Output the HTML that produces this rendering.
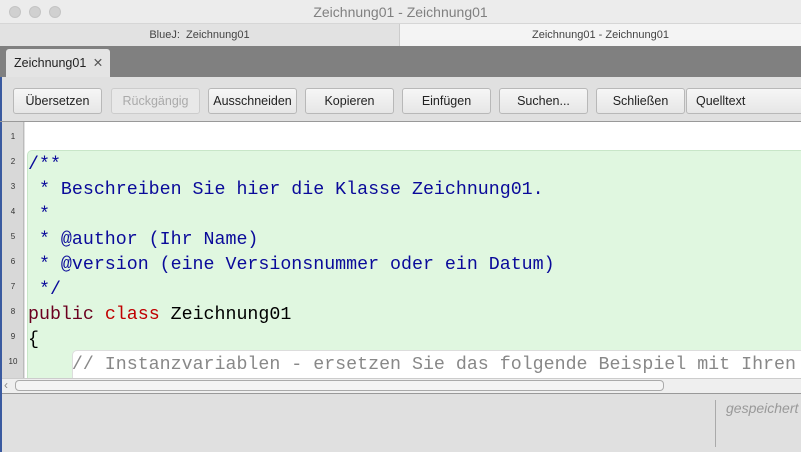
<!DOCTYPE html>
<html><head><style>
*{margin:0;padding:0;box-sizing:border-box}
body{width:801px;height:452px;overflow:hidden;background:#e0e0e0;font-family:"Liberation Sans",sans-serif;position:relative}
.abs{position:absolute}
.title{left:0;top:0;width:801px;height:24px;background:#ececec;border-bottom:1px solid #d6d6d6;text-align:center;font-size:14px;line-height:24px;color:#808080}
.dot{top:6px;width:12px;height:12px;border-radius:50%;background:#d0d0d0;border:1px solid #c4c4c4}
.wt{top:24px;height:22px;font-size:11px;line-height:22px;text-align:center;color:#444}
.dark{left:0;top:46px;width:801px;height:31px;background:#808080}
.tab{left:6px;top:49px;width:104px;height:28px;background:#e4e4e4;border-radius:3px 3px 0 0;font-size:12.5px;line-height:28px;padding-left:8px;color:#222}
.btn{top:88px;height:26px;width:89px;background:linear-gradient(#f6f6f6,#e6e6e6);border:1px solid #b8b8b8;border-radius:3px;font-size:12.5px;text-align:center;line-height:24px;color:#222}
.gut{left:2px;top:122px;width:22px;height:256px;background:#d8d8d8;border-right:1px solid #bbb}
.ln{left:2px;width:22px;text-align:center;font-size:8px;color:#333}
.ed{left:25px;top:122px;width:776px;height:256px;background:#fff;overflow:hidden}
.code{font-family:"Liberation Mono",monospace;font-size:18.3px;line-height:25px;white-space:pre}
</style></head><body>
<div class="abs" style="left:0;top:0;width:2px;height:452px;background:#3a5aa0"></div>
<div class="abs title">Zeichnung01 - Zeichnung01</div>
<div class="abs dot" style="left:9px"></div><div class="abs dot" style="left:29px"></div><div class="abs dot" style="left:49px"></div>
<div class="abs wt" style="left:0;width:400px;background:#e2e2e2;border-right:1px solid #ccc">BlueJ:&nbsp; Zeichnung01</div>
<div class="abs wt" style="left:400px;width:401px;background:#f4f4f4">Zeichnung01 - Zeichnung01</div>
<div class="abs dark"></div>
<div class="abs tab">Zeichnung01 <span style="color:#555;margin-left:3px">✕</span></div>
<div class="abs btn" style="left:13px">Übersetzen</div>
<div class="abs btn" style="left:111px;color:#aaa;background:#e8e8e8;border-color:#ccc">Rückgängig</div>
<div class="abs btn" style="left:208px">Ausschneiden</div>
<div class="abs btn" style="left:305px">Kopieren</div>
<div class="abs btn" style="left:402px">Einfügen</div>
<div class="abs btn" style="left:499px">Suchen...</div>
<div class="abs btn" style="left:596px">Schließen</div>
<div class="abs btn" style="left:686px;width:130px;text-align:left;padding-left:9px">Quelltext</div>
<div class="abs" style="left:0;top:121px;width:801px;height:1px;background:#999"></div>
<div class="abs gut"></div>
<div class="abs ln" style="top:132px">1</div><div class="abs ln" style="top:157px">2</div><div class="abs ln" style="top:182px">3</div><div class="abs ln" style="top:207px">4</div><div class="abs ln" style="top:232px">5</div><div class="abs ln" style="top:257px">6</div><div class="abs ln" style="top:282px">7</div><div class="abs ln" style="top:307px">8</div><div class="abs ln" style="top:332px">9</div><div class="abs ln" style="top:357px">10</div>
<div class="abs ed">
<div class="abs" style="left:2px;top:28px;width:790px;height:240px;background:#e0f7e0;border:1px solid #c8e6c8;border-radius:5px"></div>
<div class="abs" style="left:47px;top:228px;width:760px;height:40px;background:#fff;border:1px solid #ddd;border-radius:5px"></div>
<div class="abs code" style="left:3px;top:31px"><span style="color:#0a0a9a">/**
 * Beschreiben Sie hier die Klasse Zeichnung01.
 *
 * @author (Ihr Name)
 * @version (eine Versionsnummer oder ein Datum)
 */</span>
<span style="color:#6b0020">public</span> <span style="color:#c00000">class</span> Zeichnung01
{
    <span style="color:#888">// Instanzvariablen - ersetzen Sie das folgende Beispiel mit Ihren</span></div>
</div>
<div class="abs" style="left:2px;top:378px;width:799px;height:16px;background:#efefef;border-top:1px solid #ccc;border-bottom:1px solid #999"></div>
<div class="abs" style="left:4px;top:378px;font-size:12px;color:#888">‹</div>
<div class="abs" style="left:15px;top:380px;width:649px;height:11px;background:#f4f4f4;border:1px solid #aaa;border-radius:4px"></div>
<div class="abs" style="left:715px;top:400px;width:1px;height:47px;background:#aaa"></div>
<div class="abs" style="left:726px;top:400px;font-size:14px;font-style:italic;color:#999">gespeichert</div>
</body></html>
